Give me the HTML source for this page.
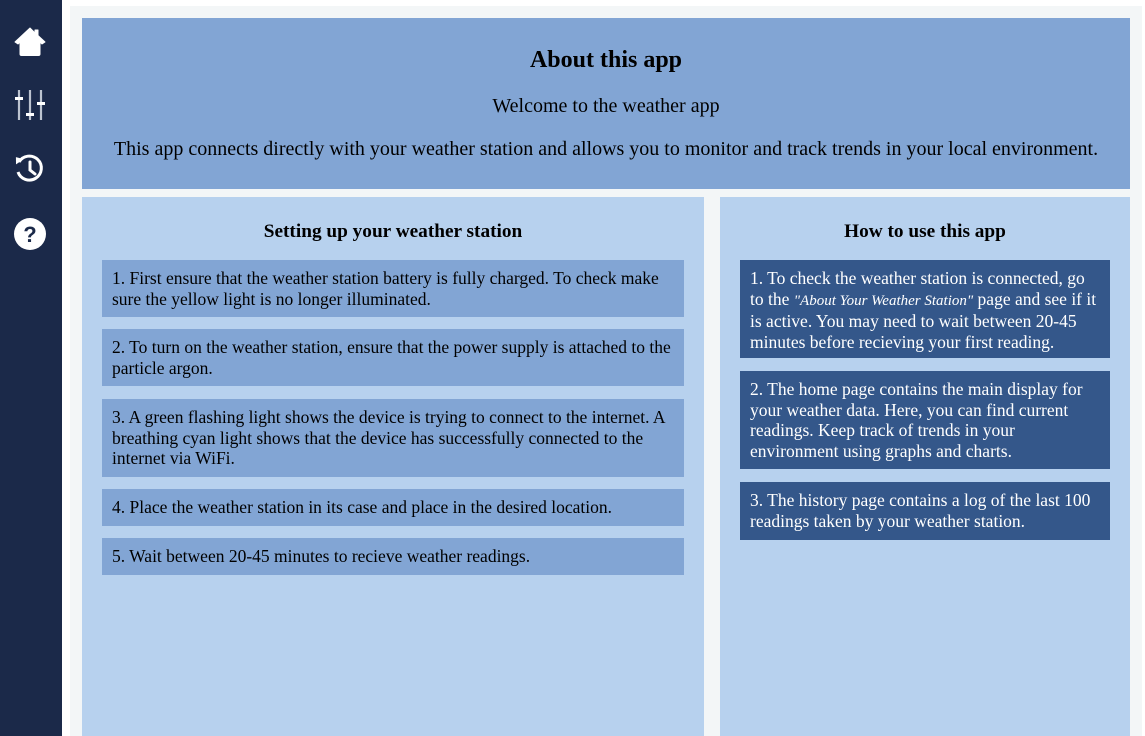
<!DOCTYPE html>
<html><head><style>
*{margin:0;padding:0;box-sizing:border-box}
body{width:1145px;height:736px;overflow:hidden;background:#fff;font-family:"Liberation Serif",serif;position:relative;color:#000}
.side{position:absolute;left:0;top:0;width:62px;height:736px;background:#1b2949}
.main{position:absolute;left:70px;top:6px;width:1072px;height:730px;background:#f3f6f7}
.top{position:absolute;left:82px;top:18px;width:1048px;height:171px;background:#82a5d4;text-align:center}
.top h1{font-size:24px;position:absolute;top:29px;width:100%}
.top p{font-size:20px;position:absolute;width:100%}
.panel{position:absolute;top:197px;height:539px;background:#b7d1ee}
.panel h2{font-size:19.3px;text-align:center;position:absolute;top:24px;width:100%}
.card{position:absolute;font-size:17.5px;line-height:20.5px;padding:8px 10px}
.card i{font-size:15px}
.l .card{left:20px;width:582px;background:#82a5d4}
.r .card{left:20px;width:370px;background:#34578a;color:#fff}
svg{position:absolute}
</style></head><body>
<div class="side">
<svg style="left:14px;top:27px" width="32" height="30" viewBox="0 0 32 30"><path d="M16 1 L1 15 L4 17 L6 15 V27 Q6 28.5 7.5 28.5 H24.5 Q26 28.5 26 27 V15 L28 17 L31 15 L24 8.5 V3 H21 V6 Z" fill="#fff" stroke="#fff" stroke-linejoin="round"/></svg>
<svg style="left:14px;top:88px" width="32" height="34" viewBox="0 0 32 34"><g stroke="#bcc3d0" stroke-width="2.2"><line x1="5" y1="2" x2="5" y2="32"/><line x1="16" y1="2" x2="16" y2="32"/><line x1="27" y1="2" x2="27" y2="32"/></g><g fill="#fff"><rect x="1" y="9" width="8" height="3"/><rect x="12" y="25" width="8" height="3"/><rect x="23" y="14" width="8" height="3"/></g></svg>
<svg style="left:14px;top:153px" width="32" height="32" viewBox="0 0 32 32"><path d="M5 9 A12 12 0 1 1 4 19" fill="none" stroke="#fff" stroke-width="3"/><path d="M1 5 L9 5 L3 12 Z" fill="#fff" transform="rotate(15 5 8)"/><path d="M16 9 V17 L21 21" fill="none" stroke="#fff" stroke-width="3" stroke-linecap="round"/></svg>
<svg style="left:14px;top:218px" width="32" height="32" viewBox="0 0 32 32"><circle cx="16" cy="16" r="16" fill="#fff"/><text x="16" y="24" font-family="Liberation Sans" font-weight="bold" font-size="22" text-anchor="middle" fill="#1b2949">?</text></svg>
</div>
<div class="main"></div>
<div class="top">
<h1>About this app</h1>
<p style="top:77px">Welcome to the weather app</p>
<p style="top:120px">This app connects directly with your weather station and allows you to monitor and track trends in your local environment.</p>
</div>
<div class="panel l" style="left:82px;width:622px">
<h2>Setting up your weather station</h2>
<div class="card" style="top:63px;height:57px">1. First ensure that the weather station battery is fully charged. To check make sure the yellow light is no longer illuminated.</div>
<div class="card" style="top:132px;height:57px">2. To turn on the weather station, ensure that the power supply is attached to the particle argon.</div>
<div class="card" style="top:202px;height:78px">3. A green flashing light shows the device is trying to connect to the internet. A breathing cyan light shows that the device has successfully connected to the internet via WiFi.</div>
<div class="card" style="top:292px;height:37px">4. Place the weather station in its case and place in the desired location.</div>
<div class="card" style="top:341px;height:37px">5. Wait between 20-45 minutes to recieve weather readings.</div>
</div>
<div class="panel r" style="left:720px;width:410px">
<h2>How to use this app</h2>
<div class="card" style="top:63px;height:98px">1. To check the weather station is connected, go to the <i>"About Your Weather Station"</i> page and see if it is active. You may need to wait between 20-45 minutes before recieving your first reading.</div>
<div class="card" style="top:174px;height:98px">2. The home page contains the main display for your weather data. Here, you can find current readings. Keep track of trends in your environment using graphs and charts.</div>
<div class="card" style="top:285px;height:58px">3. The history page contains a log of the last 100 readings taken by your weather station.</div>
</div>
</body></html>
